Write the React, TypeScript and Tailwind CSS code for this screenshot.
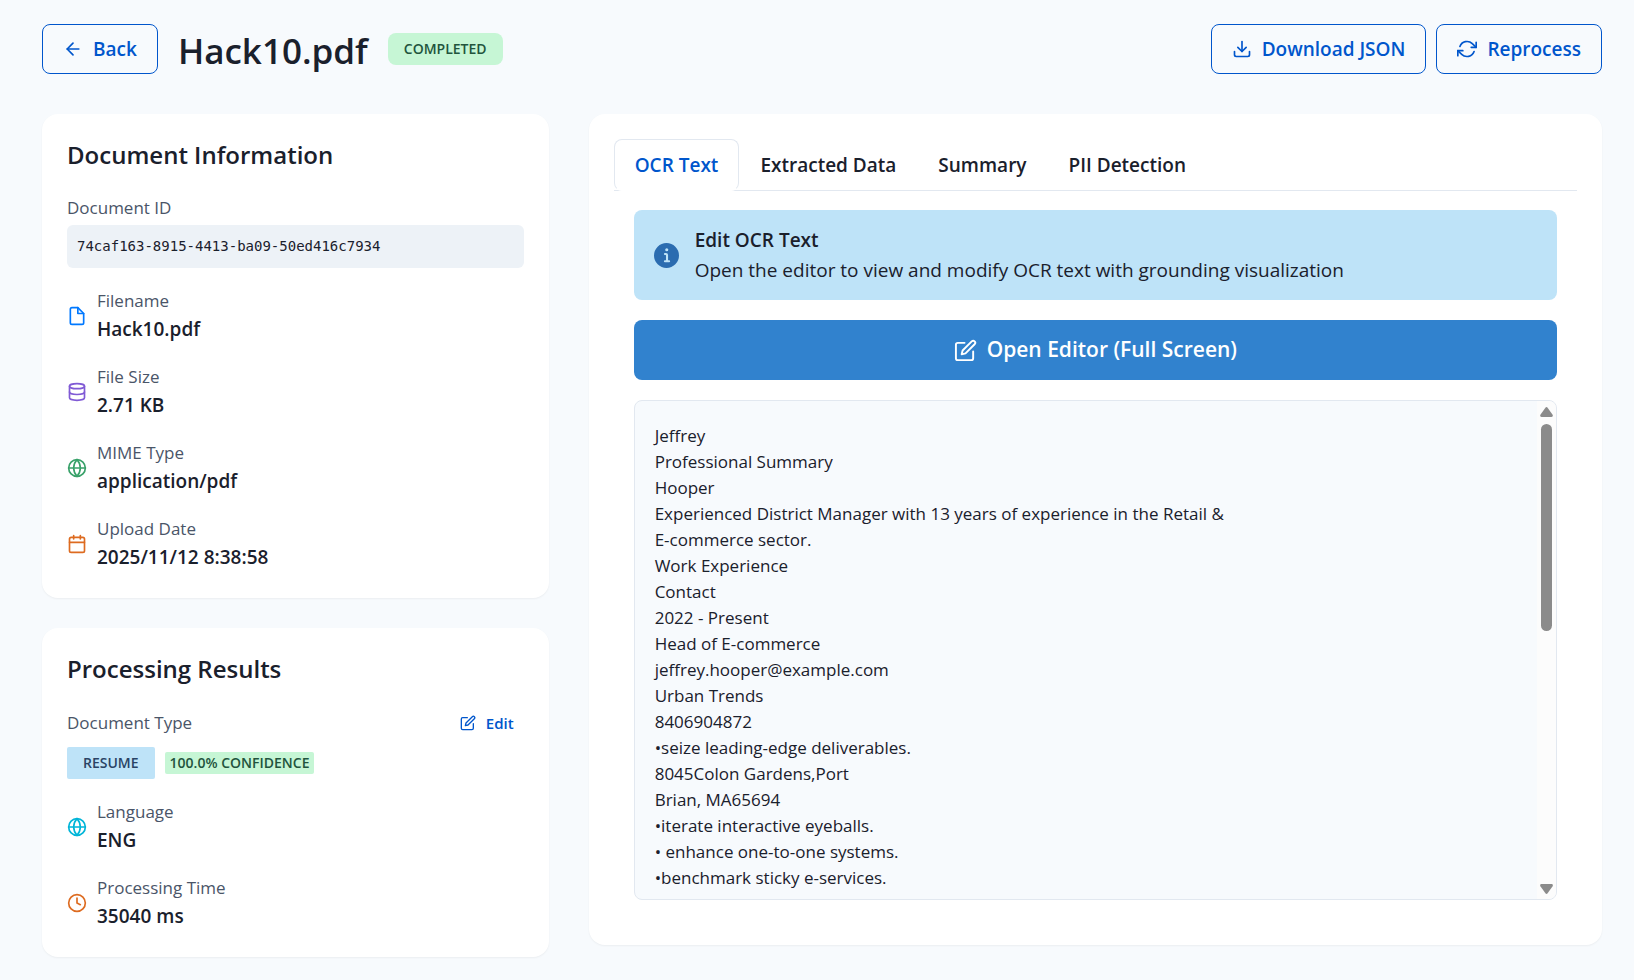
import { useState } from "react";
import {
  FiArrowLeft,
  FiCalendar,
  FiClock,
  FiDatabase,
  FiDownload,
  FiEdit,
  FiFile,
  FiGlobe,
  FiRefreshCw,
} from "react-icons/fi";
import type { IconType } from "react-icons";
import { clsx } from "clsx";

const TABS = ["OCR Text", "Extracted Data", "Summary", "PII Detection"];

const OCR_LINES = [
  "Jeffrey",
  "Professional Summary",
  "Hooper",
  "Experienced District Manager with 13 years of experience in the Retail &",
  "E-commerce sector.",
  "Work Experience",
  "Contact",
  "2022 - Present",
  "Head of E-commerce",
  "jeffrey.hooper@example.com",
  "Urban Trends",
  "8406904872",
  "•seize leading-edge deliverables.",
  "8045Colon Gardens,Port",
  "Brian, MA65694",
  "•iterate interactive eyeballs.",
  "• enhance one-to-one systems.",
  "•benchmark sticky e-services.",
];

interface OutlineButtonProps {
  icon: IconType;
  label: string;
}

function OutlineButton({ icon: Icon, label }: OutlineButtonProps) {
  return (
    <button
      type="button"
      className="flex h-[50px] items-center gap-2.5 rounded-lg border border-[#0056cc] px-5 text-[19px] font-semibold text-[#0056cc] transition-colors hover:bg-blue-50"
    >
      <Icon size={20} />
      {label}
    </button>
  );
}

interface InfoRowProps {
  icon: IconType;
  iconClass: string;
  label: string;
  value: string;
}

function InfoRow({ icon: Icon, iconClass, label, value }: InfoRowProps) {
  return (
    <div className="flex items-center gap-2.5">
      <Icon size={20} className={clsx("shrink-0", iconClass)} />
      <dl className="min-w-0">
        <dt className="text-[17px] leading-[26px] text-[#4a5568]">{label}</dt>
        <dd className="text-[19px] leading-[30px] font-semibold">{value}</dd>
      </dl>
    </div>
  );
}

function Card({ title, children }: { title: string; children: React.ReactNode }) {
  return (
    <section className="rounded-2xl bg-white px-[25px] pt-[25px] pb-[26px] shadow-xs">
      <h2 className="text-2xl leading-8 font-semibold">{title}</h2>
      {children}
    </section>
  );
}

function InfoIcon() {
  return (
    <svg viewBox="0 0 24 24" className="size-[25px] shrink-0 fill-[#2b6cb0]" aria-hidden>
      <path d="M12,0A12,12,0,1,0,24,12,12.013,12.013,0,0,0,12,0Zm.25,5a1.5,1.5,0,1,1-1.5,1.5A1.5,1.5,0,0,1,12.25,5ZM14.5,18.5h-4a1,1,0,0,1,0-2h.75a.25.25,0,0,0,.25-.25v-4.5a.25.25,0,0,0-.25-.25H10.5a1,1,0,0,1,0-2h1a2,2,0,0,1,2,2v4.75a.25.25,0,0,0,.25.25h.75a1,1,0,1,1,0,2Z" />
    </svg>
  );
}

function ScrollRail() {
  return (
    <div
      className="flex w-[19px] shrink-0 flex-col items-center bg-[#fcfcfc] pt-1.5 pb-[5px]"
      aria-hidden
    >
      <svg viewBox="0 0 13 10" className="h-2.5 w-[13px] fill-[#8b8b8b]">
        <path d="M5.4.7q1.1-1.4 2.2 0l5 7q.9 2.2-1.1 2.3h-10q-2-.1-1.1-2.3z" />
      </svg>
      <div className="mt-[7px] h-[207px] w-[11px] rounded-full bg-[#8b8b8b]" />
      <svg viewBox="0 0 13 10" className="mt-auto h-2.5 w-[13px] rotate-180 fill-[#8b8b8b]">
        <path d="M5.4.7q1.1-1.4 2.2 0l5 7q.9 2.2-1.1 2.3h-10q-2-.1-1.1-2.3z" />
      </svg>
    </div>
  );
}

export default function App() {
  const [activeTab, setActiveTab] = useState(TABS[0]);

  return (
    <div className="min-h-screen bg-[#f7fafd] pt-6 pr-8 pb-5 pl-[42px] font-['Open_Sans','Noto_Sans',sans-serif] text-[#1a202c]">
      <header className="flex items-center justify-between gap-5">
        <div className="flex items-center gap-5">
          <OutlineButton icon={FiArrowLeft} label="Back" />
          <h1 className="pt-1 text-[35px] leading-10 font-semibold">Hack10.pdf</h1>
          <span className="rounded-lg bg-[#c6f6d5] px-4 text-sm leading-8 font-semibold text-[#22543d]">
            COMPLETED
          </span>
        </div>
        <div className="flex items-center gap-2.5">
          <OutlineButton icon={FiDownload} label="Download JSON" />
          <OutlineButton icon={FiRefreshCw} label="Reprocess" />
        </div>
      </header>

      <main className="mt-10 grid grid-cols-[minmax(0,1fr)_minmax(0,2fr)] items-start gap-10">
        <div className="flex flex-col gap-[30px]">
          <Card title="Document Information">
            <p className="mt-6 text-[17px] leading-[26px] text-[#4a5568]">Document ID</p>
            <code className="mt-1 block rounded-md bg-[#edf2f7] px-2.5 font-['DejaVu_Sans_Mono',monospace] text-sm leading-[43px]">
              74caf163-8915-4413-ba09-50ed416c7934
            </code>
            <div className="mt-5 flex flex-col gap-5">
              <InfoRow icon={FiFile} iconClass="text-[#0078ff]" label="Filename" value="Hack10.pdf" />
              <InfoRow icon={FiDatabase} iconClass="text-[#805ad5]" label="File Size" value="2.71 KB" />
              <InfoRow icon={FiGlobe} iconClass="text-[#38a169]" label="MIME Type" value="application/pdf" />
              <InfoRow
                icon={FiCalendar}
                iconClass="text-[#dd6b20]"
                label="Upload Date"
                value="2025/11/12 8:38:58"
              />
            </div>
          </Card>

          <Card title="Processing Results">
            <div className="mt-[18px] flex h-10 items-center justify-between">
              <p className="text-[17px] leading-[26px] text-[#4a5568]">Document Type</p>
              <button
                type="button"
                className="flex items-center gap-2.5 px-2.5 text-[15px] font-semibold text-[#0056cc]"
              >
                <FiEdit size={16} />
                Edit
              </button>
            </div>
            <div className="mt-1 flex items-center gap-2.5">
              <span className="rounded-xs bg-[#bee3f8] px-4 text-sm leading-8 font-semibold text-[#2a4365]">
                RESUME
              </span>
              <span className="rounded-xs bg-[#c6f6d5] px-[5px] text-sm leading-[22px] font-semibold text-[#22543d]">
                100.0% CONFIDENCE
              </span>
            </div>
            <div className="mt-5 flex flex-col gap-5">
              <InfoRow icon={FiGlobe} iconClass="text-[#00b5d8]" label="Language" value="ENG" />
              <InfoRow icon={FiClock} iconClass="text-[#dd6b20]" label="Processing Time" value="35040 ms" />
            </div>
          </Card>
        </div>

        <section className="rounded-2xl bg-white p-[25px] shadow-xs">
          <div role="tablist" className="flex border-b border-[#e2e8f0]">
            {TABS.map((tab) => (
              <button
                key={tab}
                type="button"
                role="tab"
                aria-selected={tab === activeTab}
                onClick={() => setActiveTab(tab)}
                className={clsx(
                  "-mb-px h-[52px] rounded-lg border px-5 text-[19px] font-semibold",
                  tab === activeTab
                    ? "border-[#e2e8f0] border-b-white bg-white text-[#0056cc]"
                    : "border-transparent"
                )}
              >
                {tab}
              </button>
            ))}
          </div>

          <div role="tabpanel" className="flex flex-col gap-5 px-5 pt-[19px] pb-5">
            <div className="flex items-center gap-4 rounded-lg bg-[#bee3f8] px-5 py-[15px] leading-[30px]">
              <InfoIcon />
              <div className="text-[19px]">
                <p className="font-semibold">Edit OCR Text</p>
                <p>Open the editor to view and modify OCR text with grounding visualization</p>
              </div>
            </div>

            <button
              type="button"
              className="flex h-[60px] items-center justify-center gap-2.5 rounded-lg bg-[#3182ce] text-[21px] font-semibold text-white transition-colors hover:bg-[#2b6cb0]"
            >
              <FiEdit size={23} />
              Open Editor (Full Screen)
            </button>

            <div className="flex h-[500px] overflow-hidden rounded-lg border border-[#e2e8f0] bg-[#f7fafd]">
              <pre className="min-w-0 flex-1 overflow-hidden px-5 pt-[22px] font-[inherit] text-[17px] leading-[26px] whitespace-pre-wrap">
                {OCR_LINES.join("\n")}
              </pre>
              <ScrollRail />
            </div>
          </div>
        </section>
      </main>
    </div>
  );
}
